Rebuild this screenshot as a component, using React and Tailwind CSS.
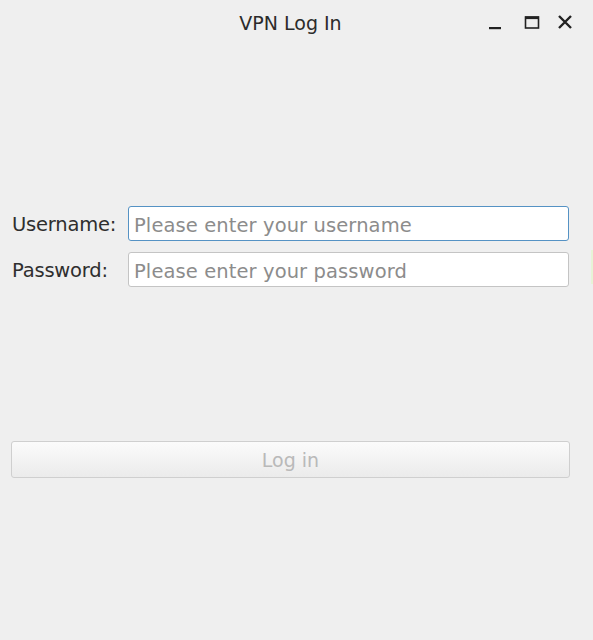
export default function App() {
  return (
    <div
      className="relative w-[593px] h-[640px] bg-[#efefef] text-[#2e2e2e] overflow-hidden"
      style={{ fontFamily: '"DejaVu Sans", "Noto Sans", sans-serif' }}
    >
      {/* title bar */}
      <div className="relative h-[46px] flex items-center justify-center">
        <span className="text-[19px] text-[#2b2b2b] ml-[-12px]">VPN Log In</span>
        <div className="absolute right-[20px] top-[14px] flex items-center">
          <svg width="16" height="16" viewBox="0 0 16 16" className="mr-[21px]">
            <rect x="2" y="13" width="12" height="2.2" fill="#222" />
          </svg>
          <svg width="16" height="16" viewBox="0 0 16 16" className="mr-[17px]">
            <rect x="1.5" y="3" width="13" height="11" fill="none" stroke="#222" strokeWidth="1.6" />
            <rect x="1" y="2.5" width="14" height="2.6" fill="#222" />
          </svg>
          <svg width="16" height="16" viewBox="0 0 16 16">
            <path d="M2 2 L14 14 M14 2 L2 14" stroke="#222" strokeWidth="2.4" />
          </svg>
        </div>
      </div>

      <div className="pt-[160px] px-[12px] pr-[24px]">
        <div className="grid grid-cols-[106px_1fr] gap-x-[10px] gap-y-[11px] items-center">
          <label className="text-[19.5px] text-[#2e2e2e] whitespace-nowrap tracking-[-0.2px] pt-[2px]">Username:</label>
          <input
            placeholder="Please enter your username"
            className="h-[35px] px-[5px] pt-[3px] bg-white border border-[#5592c4] rounded-[3px] text-[19.5px] tracking-[0.1px] placeholder:text-[#8c8c8c] outline-none"
          />
          <label className="text-[19.5px] text-[#2e2e2e] whitespace-nowrap tracking-[-0.2px] pt-[2px]">Password:</label>
          <input
            placeholder="Please enter your password"
            className="h-[35px] px-[5px] pt-[3px] bg-white border border-[#c4c4c4] rounded-[3px] text-[19.5px] tracking-[0.1px] placeholder:text-[#8c8c8c] outline-none"
          />
        </div>

        <button
          disabled
          className="mt-[154px] w-[559px] -ml-[1px] h-[37px] pt-[1px] rounded-[3px] border border-[#cfcfcf] bg-gradient-to-b from-[#fbfbfb] to-[#ebebeb] text-[19px] text-[#b9b9b9]"
        >
          Log in
        </button>
      </div>

      <div className="absolute right-0 top-[250px] w-[2px] h-[34px] bg-[#e7f3d6]" />
    </div>
  );
}
